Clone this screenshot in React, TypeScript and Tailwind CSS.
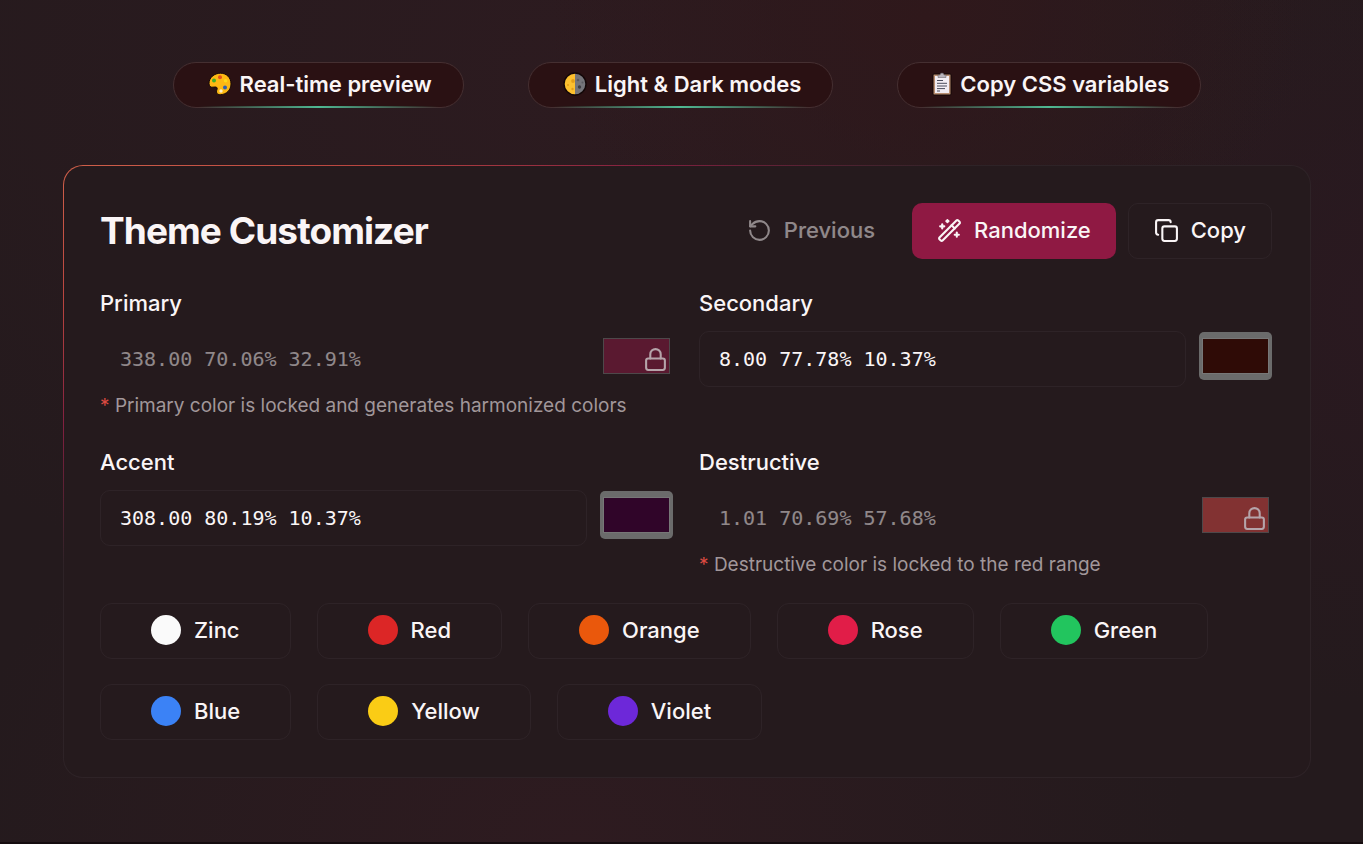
import React, { useState } from 'react';
import { Copy, Lock, RotateCcw, WandSparkles } from 'lucide-react';

const PaletteIcon = () => (
  <svg viewBox="0 0 24 24" className="size-6 shrink-0" aria-hidden="true">
    <path
      d="M12.5 1.2C6.300 1.200 1 5.700 1 11.300c0 3 1.700 4.200 4 3.900 2-.3 3.600-.5 4.100.7.500 1.200-.7 2.300-.6 4 .1 2 1.900 3 4.300 2.800 5.700-.4 10.200-4.700 10.200-10.800C23 5.600 18.600 1.200 12.500 1.200Z"
      fill="#fdb813"
      stroke="#170808"
      strokeWidth="1"
    />
    <circle cx="6" cy="8.500" r="2" fill="#3fae29" />
    <circle cx="12" cy="5.300" r="2" fill="#e2501c" />
    <circle cx="17.600" cy="8.800" r="1.800" fill="#ffd91a" />
    <circle cx="17" cy="15.400" r="2" fill="#2f5fae" />
    <circle cx="13" cy="19" r="1.700" fill="#fff0c8" />
  </svg>
);

const HalfMoonIcon = () => (
  <svg viewBox="0 0 24 24" className="size-6 shrink-0" aria-hidden="true">
    <path d="M12 1a11 11 0 0 0 0 22Z" fill="#fdc02f" />
    <path d="M12 1a11 11 0 0 1 0 22Z" fill="#75757a" />
    <circle cx="12" cy="12" r="11" fill="none" stroke="#120607" strokeWidth="1.400" />
    <circle cx="10" cy="9" r="1.900" fill="#e59e17" />
    <circle cx="5" cy="13" r="1" fill="#e59e17" />
    <circle cx="9.500" cy="17" r="1.200" fill="#e59e17" />
    <circle cx="16.500" cy="15" r="1.700" fill="#3f3f44" />
    <circle cx="15" cy="8" r="1.300" fill="#5a5a60" />
    <circle cx="19.500" cy="10.500" r="1" fill="#5a5a60" />
  </svg>
);

const ClipboardIcon = () => (
  <svg viewBox="2 0 20 24" className="h-6 w-5 shrink-0" aria-hidden="true">
    <rect x="3" y="2" width="18" height="21" rx="1" fill="#b98f72" stroke="#120607" strokeWidth="1" />
    <rect x="5" y="4" width="14" height="17" fill="#f2edf3" />
    <path d="M8 5.500V3h2a2 2 0 0 1 4 0h2v2.500Z" fill="#b9b4bb" stroke="#5f5a61" strokeWidth=".5" />
    <path d="M7 8.500h6M7 11.300h10M7 14h10M7 16.600h8M7 19h3" stroke="#4a4d5c" strokeWidth="1" />
  </svg>
);

const features = [
  { label: 'Real-time preview', icon: <PaletteIcon /> },
  { label: 'Light & Dark modes', icon: <HalfMoonIcon /> },
  { label: 'Copy CSS variables', icon: <ClipboardIcon /> },
];

const presets = [
  { name: 'Zinc', dot: 'bg-[#fafafa]' },
  { name: 'Red', dot: 'bg-[#dc2626]' },
  { name: 'Orange', dot: 'bg-[#ea580c]' },
  { name: 'Rose', dot: 'bg-[#e11d48]' },
  { name: 'Green', dot: 'bg-[#22c55e]' },
  { name: 'Blue', dot: 'bg-[#3b82f6]' },
  { name: 'Yellow', dot: 'bg-[#facc15]' },
  { name: 'Violet', dot: 'bg-[#6d28d9]' },
];

interface ColorFieldProps {
  id: string;
  label: string;
  hsl: string;
  hex: string;
  note?: string;
}

const ColorField: React.FC<ColorFieldProps> = ({ id, label, hsl, hex, note }) => {
  const [value, setValue] = useState(hsl);
  const [color, setColor] = useState(hex);
  const locked = Boolean(note);

  return (
    <div className="min-w-0">
      <label htmlFor={id} className="block text-[22px] leading-7 font-medium">{label}</label>
      <div className="mt-3.5 flex items-start gap-[13px]">
        <input
          id={id}
          type="text"
          value={value}
          disabled={locked}
          onChange={(e) => setValue(e.target.value)}
          className="h-14 min-w-0 flex-1 rounded-[10px] border border-[#2e2327] px-[19px] font-['DejaVu_Sans_Mono',monospace] text-xl disabled:border-transparent disabled:opacity-50"
        />
        <div className="relative mt-px h-12 w-[73px] shrink-0">
          <input
            type="color"
            aria-label={`${label} color`}
            value={color}
            disabled={locked}
            onChange={(e) => setColor(e.target.value)}
            className="block h-12 w-full rounded-[5px] bg-[#6b6b6b] px-[3px] py-1.5 disabled:bg-transparent disabled:opacity-50 [&::-webkit-color-swatch]:rounded-none [&::-webkit-color-swatch]:border [&::-webkit-color-swatch]:border-solid [&::-webkit-color-swatch]:border-[#777777] [&::-webkit-color-swatch-wrapper]:p-0"
          />
          {locked && <Lock size={25} className="absolute right-[5px] bottom-2 text-[#b5a4aa]" />}
        </div>
      </div>
      {note && (
        <p className="mt-[5px] text-[19px] leading-7 text-[#a1979a]">
          <span className="text-[#dc4a41]">*</span> {note}
        </p>
      )}
    </div>
  );
};

const App: React.FC = () => {
  return (
    <div className="flex min-h-screen flex-col bg-[#241a1d] bg-[radial-gradient(ellipse_380px_300px_at_68%_2%,#2f181b_0%,transparent_100%),radial-gradient(ellipse_620px_460px_at_42%_100%,#2e1b20_0%,transparent_100%),radial-gradient(ellipse_300px_400px_at_100%_36%,#2a1920_0%,transparent_100%),radial-gradient(ellipse_900px_600px_at_46%_8%,#2d1b20_0%,transparent_100%)] font-['Inter',sans-serif] text-[#faf5f6]">
      <main className="flex-1 pt-[62px] pr-[52px] pb-[63px] pl-[63px]">
        {/* Feature pills */}
        <ul className="flex flex-wrap justify-center gap-16">
          {features.map((feature) => (
            <li
              key={feature.label}
              className="relative flex items-center gap-2 rounded-full border border-[#452f31] bg-[#2a1113] pt-[7px] pr-[31px] pb-[9px] pl-[34px] text-[22px] leading-7 font-semibold"
            >
              {feature.icon}
              {feature.label}
              <span className="absolute inset-x-6 -bottom-px h-0.5 bg-linear-to-r from-transparent via-[#4fb892] to-transparent" />
            </li>
          ))}
        </ul>

        {/* Customizer card, 1px gradient edge */}
        <section className="mt-[57px] rounded-[20px] bg-[#2e2327] bg-[radial-gradient(ellipse_900px_400px_at_0%_0%,#d0604a_0%,#b8443f_35%,#822040_65%,#2e2327_100%)] p-px">
          <div className="rounded-[19px] bg-[#251a1d] py-[37px] pr-[38px] pl-9">
            <header className="flex flex-wrap items-center justify-between gap-4">
              <h2 className="text-[37px] leading-10 font-bold tracking-tight">Theme Customizer</h2>
              <div className="flex gap-3 text-[22px] leading-7 font-medium">
                <button type="button" disabled className="flex h-14 items-center gap-3 rounded-[10px] px-[25px] pb-0.5 opacity-50">
                  <RotateCcw size={25} /> Previous
                </button>
                <button type="button" className="flex h-14 items-center gap-3 rounded-[10px] bg-[#8f1943] px-[25px] pb-0.5">
                  <WandSparkles size={25} /> Randomize
                </button>
                <button type="button" className="flex h-14 items-center gap-3 rounded-[10px] border border-[#2e2327] px-[25px] pb-0.5">
                  <Copy size={25} /> Copy
                </button>
              </div>
            </header>

            <div className="mt-[30px] grid grid-cols-2 gap-x-[26px] gap-y-7">
              <ColorField id="primary" label="Primary" hsl="338.00 70.06% 32.91%" hex="#8f1943" note="Primary color is locked and generates harmonized colors" />
              <ColorField id="secondary" label="Secondary" hsl="8.00 77.78% 10.37%" hex="#2f0b06" />
              <ColorField id="accent" label="Accent" hsl="308.00 80.19% 10.37%" hex="#300529" />
              <ColorField id="destructive" label="Destructive" hsl="1.01 70.69% 57.68%" hex="#df4a47" note="Destructive color is locked to the red range" />
            </div>

            {/* Presets */}
            <div className="mt-6 flex flex-wrap gap-x-[26px] gap-y-[25px]">
              {presets.map((preset) => (
                <button
                  key={preset.name}
                  type="button"
                  className="flex h-14 items-center gap-[13px] rounded-[12px] border border-[#2e2327] px-[50px] pb-0.5 text-[22px] leading-7 font-medium"
                >
                  <span className={`size-[30px] rounded-full ${preset.dot}`} />
                  {preset.name}
                </button>
              ))}
            </div>
          </div>
        </section>
      </main>
      <div className="h-0.5 bg-[#150c0f]" />
    </div>
  );
};

export default App;
